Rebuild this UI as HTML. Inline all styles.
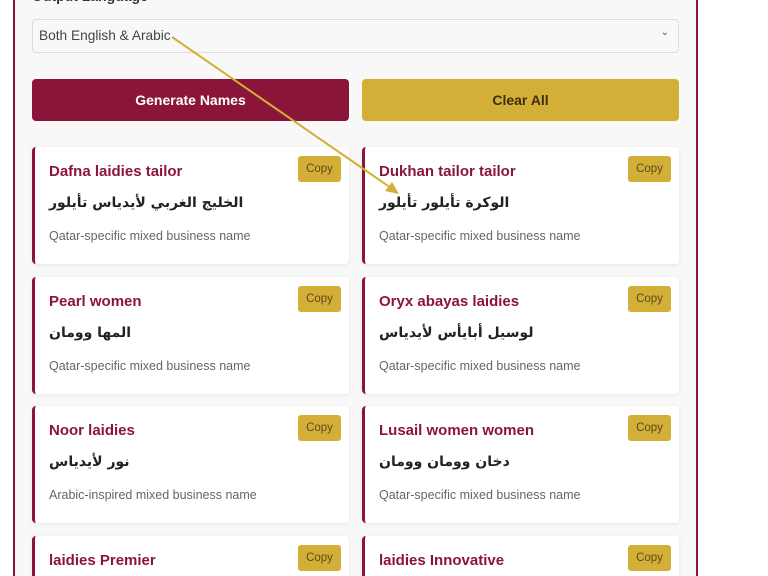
<!DOCTYPE html>
<html><head><meta charset="utf-8"><style>
*{box-sizing:border-box;margin:0;padding:0}
html,body{width:768px;height:576px;overflow:hidden}
body{background:#fff;font-family:"Liberation Sans",sans-serif;position:relative}
.panel{position:absolute;left:13px;top:-10px;width:685px;height:586px;background:#f8f8f8;border-left:2px solid #8b1538;border-right:2px solid #8b1538}
.label{position:absolute;left:32px;top:-12px;font-weight:bold;font-size:14px;color:#333}
.sel{position:absolute;left:32px;top:19px;width:647px;height:34px;border:1px solid #ddd;border-radius:4px;background:#f8f8f8;font-size:13.7px;color:#444;padding:8px 6px}
.sel .ch{position:absolute;right:9px;top:7px;font-size:10px;color:#555}
.btn{position:absolute;top:79px;height:42px;border-radius:4px;font-weight:bold;font-size:14px;text-align:center;line-height:42px}
.card{position:absolute;width:317px;height:117px;background:#fff;border-left:3px solid #8b1538;border-radius:4px;box-shadow:0 1px 4px rgba(0,0,0,.08)}
.card.short{height:40px;border-radius:4px 4px 0 0}
.t{position:absolute;left:14px;top:16px;font-weight:bold;font-size:15px;color:#8b1538}
.a{position:absolute;left:14px;top:48px;font-weight:bold;font-size:14px;color:#222;font-family:"DejaVu Sans",sans-serif}
.d{position:absolute;left:14px;top:82px;font-size:12.5px;color:#666}
.c{position:absolute;left:263px;top:9px;width:43px;height:26px;background:#d4af37;border-radius:3px;font-size:11.5px;color:#5a4a1a;display:flex;align-items:center;justify-content:center}
</style></head><body>
<div class="panel"></div>
<div class="label">Output Language</div>
<div class="sel">Both English &amp; Arabic<span class="ch">&#8964;</span></div>
<div class="btn" style="left:32px;width:317px;background:#8b1538;color:#fff">Generate Names</div>
<div class="btn" style="left:362px;width:317px;background:#d4af37;color:#3a2f10">Clear All</div>

<div class="card" style="left:32px;top:147px"><div class="t">Dafna laidies tailor</div><div class="a" dir="rtl">الخليج الغربي لأيدياس تأيلور</div><div class="d">Qatar-specific mixed business name</div><div class="c">Copy</div></div>
<div class="card" style="left:362px;top:147px"><div class="t">Dukhan tailor tailor</div><div class="a" dir="rtl">الوكرة تأيلور تأيلور</div><div class="d">Qatar-specific mixed business name</div><div class="c">Copy</div></div>
<div class="card" style="left:32px;top:277px"><div class="t">Pearl women</div><div class="a" dir="rtl">المها وومان</div><div class="d">Qatar-specific mixed business name</div><div class="c">Copy</div></div>
<div class="card" style="left:362px;top:277px"><div class="t">Oryx abayas laidies</div><div class="a" dir="rtl">لوسيل أبايأس لأيدياس</div><div class="d">Qatar-specific mixed business name</div><div class="c">Copy</div></div>
<div class="card" style="left:32px;top:406px"><div class="t">Noor laidies</div><div class="a" dir="rtl">نور لأيدياس</div><div class="d">Arabic-inspired mixed business name</div><div class="c">Copy</div></div>
<div class="card" style="left:362px;top:406px"><div class="t">Lusail women women</div><div class="a" dir="rtl">دخان وومان وومان</div><div class="d">Qatar-specific mixed business name</div><div class="c">Copy</div></div>
<div class="card short" style="left:32px;top:536px"><div class="t">laidies Premier</div><div class="c">Copy</div></div>
<div class="card short" style="left:362px;top:536px"><div class="t">laidies Innovative</div><div class="c">Copy</div></div>

<svg style="position:absolute;left:0;top:0" width="768" height="576">
<line x1="172" y1="37" x2="394" y2="190" stroke="#d4af37" stroke-width="2"/>
<polygon points="399,194 385,191 392,182" fill="#d4af37"/>
</svg>
</body></html>
